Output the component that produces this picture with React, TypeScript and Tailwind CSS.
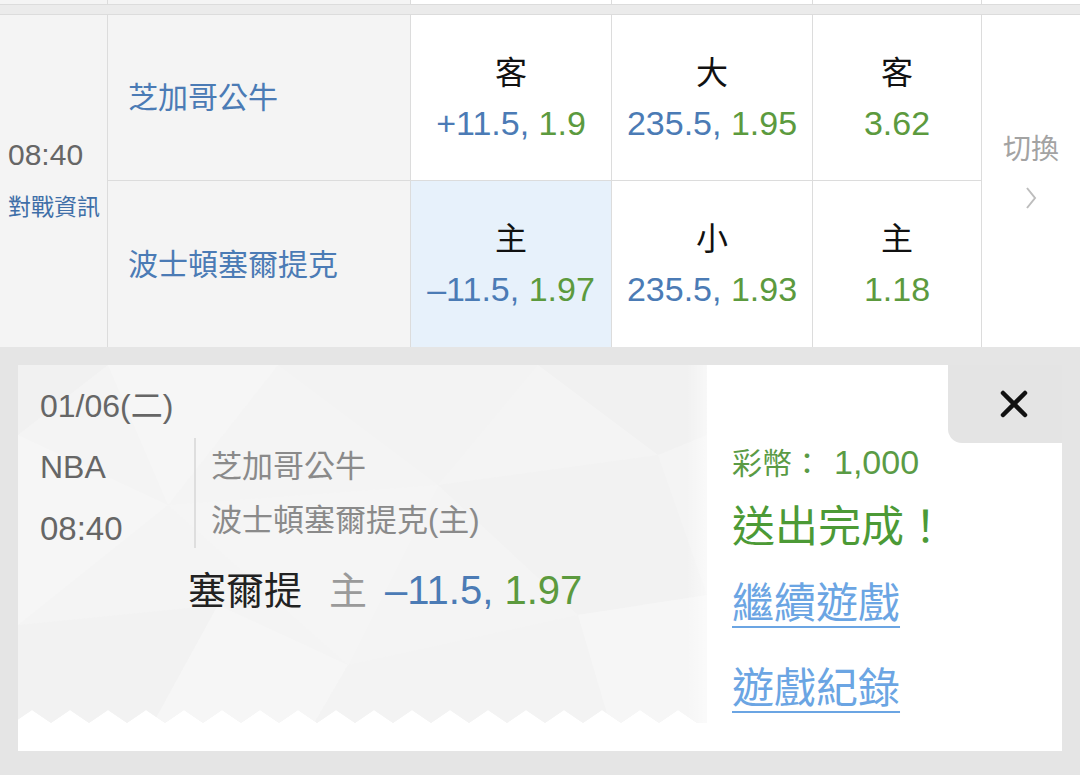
import React from "react";

const FONT = '"Liberation Sans", "Noto Sans CJK TC", sans-serif';

const cols = "grid grid-cols-[108px_303px_201px_201px_169px_98px]";

type Odd = { label: string; line?: string; price: string; active?: boolean };

const topRow: Odd[] = [
  { label: "客", line: "+11.5, ", price: "1.9" },
  { label: "大", line: "235.5, ", price: "1.95" },
  { label: "客", price: "3.62" },
];
const bottomRow: Odd[] = [
  { label: "主", line: "–11.5, ", price: "1.97", active: true },
  { label: "小", line: "235.5, ", price: "1.93" },
  { label: "主", price: "1.18" },
];

function OddCell({ o, last }: { o: Odd; last?: boolean }) {
  return (
    <div
      className={`flex flex-col items-center justify-center border-r border-[#dcdcdc] ${last ? "" : "border-b"} ${
        o.active ? "bg-[#e7f1fb]" : "bg-white"
      }`}
    >
      <div className="text-[32px] leading-[50px] text-[#111]">{o.label}</div>
      <div className="whitespace-pre text-[34px] leading-[50px]">
        {o.line && <span className="text-[#4b7bb5]">{o.line}</span>}
        <span className="text-[#5c9a3e]">{o.price}</span>
      </div>
    </div>
  );
}

// zigzag clip for the faceted ticket stub
function zigzag() {
  const pts: string[] = ["0,0", "689,0", "689,358"];
  for (let x = 689; x > 0; x -= 38) {
    pts.push(`${x - 10},358`, `${x - 29},345`);
  }
  pts.push("0,345");
  return pts.join(" ");
}

function Facets() {
  return (
    <svg className="absolute inset-0" width="689" height="386" viewBox="0 0 689 386">
      <defs>
        <clipPath id="stub">
          <polygon points={zigzag()} />
        </clipPath>
        <linearGradient id="fade" x1="0" x2="1" y1="0" y2="0">
          <stop offset="0.97" stopColor="#fff" stopOpacity="0" />
          <stop offset="1" stopColor="#fff" stopOpacity="0.5" />
        </linearGradient>
      </defs>
      <g clipPath="url(#stub)">
        <rect width="689" height="386" fill="#f4f4f4" />
        <polygon points="0,0 90,0 0,70" fill="#f1f1f1" />
        <polygon points="90,0 260,0 150,140" fill="#f6f6f6" />
        <polygon points="260,0 520,0 420,120" fill="#f3f3f3" />
        <polygon points="520,0 689,0 689,70 640,90" fill="#f1f1f1" />
        <polygon points="0,70 150,140 0,260" fill="#f6f6f6" />
        <polygon points="150,140 420,120 330,300" fill="#f5f5f5" />
        <polygon points="420,120 640,90 689,230 560,250" fill="#f2f2f2" />
        <polygon points="0,260 200,240 120,386 0,386" fill="#f2f2f2" />
        <polygon points="200,240 330,300 280,386 120,386" fill="#f6f6f6" />
        <polygon points="330,300 560,250 600,386 280,386" fill="#f3f3f3" />
        <polygon points="560,250 689,230 689,386 600,386" fill="#f6f6f6" />
        <rect width="689" height="386" fill="url(#fade)" />
      </g>
    </svg>
  );
}

export default function App() {
  return (
    <div
      className="flex h-[775px] w-[1080px] flex-col overflow-hidden bg-[#e5e5e5]"
      style={{ fontFamily: FONT }}
    >
      {/* previous row tail */}
      <div className={`${cols} h-[4px]`}>
        <div className="border-r border-[#dcdcdc] bg-[#f4f4f4]" />
        <div className="border-r border-[#dcdcdc] bg-[#f4f4f4]" />
        <div className="border-r border-[#dcdcdc] bg-white" />
        <div className="border-r border-[#dcdcdc] bg-white" />
        <div className="border-r border-[#dcdcdc] bg-white" />
        <div className="bg-white" />
      </div>
      <div className="h-[11px] border-y border-[#dcdcdc] bg-[#ebebeb]" />

      {/* match row */}
      <div className={`${cols} grid-rows-[166px_166px]`}>
        <div className="row-span-2 flex flex-col justify-center border-r border-[#dcdcdc] bg-[#f4f4f4] pl-[8px]">
          <div className="text-[30px] leading-[52px] text-[#666]">08:40</div>
          <div className="text-[23px] leading-[52px] text-[#3f6fa8]">對戰資訊</div>
        </div>
        <div className="flex items-center border-r border-b border-[#dcdcdc] bg-[#f4f4f4] pl-[20px] text-[30px] text-[#4b7bb5]">
          芝加哥公牛
        </div>
        {topRow.map((o, i) => (
          <OddCell key={i} o={o} />
        ))}
        <div className="row-span-2 flex flex-col items-center justify-center bg-white pb-[14px] text-[#a3a3a3]">
          <div className="text-[28px] leading-[48px]">切換</div>
          <svg width="14" height="48" viewBox="0 0 14 48">
            <polyline points="3,14 11,24 3,34" fill="none" stroke="#bdbdbd" strokeWidth="2" />
          </svg>
        </div>
        <div className="flex items-center border-r border-[#dcdcdc] bg-[#f4f4f4] pl-[20px] text-[30px] text-[#4b7bb5]">
          波士頓塞爾提克
        </div>
        {bottomRow.map((o, i) => (
          <OddCell key={i} o={o} last />
        ))}
      </div>

      {/* confirmation ticket */}
      <div className="mx-[18px] mt-[18px] flex h-[386px] bg-white">
        <div className="relative w-[689px]">
          <Facets />
          <div className="relative pl-[22px] pt-[10px] text-[#666]">
            <div className="text-[32px] leading-[62px]">01/06(二)</div>
            <div className="flex items-start">
              <div className="w-[154px] text-[32px] leading-[61px]">
                <div>NBA</div>
                <div className="text-[33px]">08:40</div>
              </div>
              <div className="mt-[1px] h-[110px] border-l-2 border-[#dedede] pl-[15px] pt-[2px] text-[31px] leading-[54px] text-[#8a8a8a]">
                <div>芝加哥公牛</div>
                <div>波士頓塞爾提克(主)</div>
              </div>
            </div>
            <div className="ml-[148px] flex items-baseline whitespace-pre leading-[62px]">
              <span className="text-[38px] text-[#222]">塞爾提</span>
              <span className="ml-[27px] text-[38px] text-[#9a9a9a]">主</span>
              <span className="ml-[18px] text-[40px] text-[#4b7bb5]">–11.5, </span>
              <span className="text-[40px] text-[#5c9a3e]">1.97</span>
            </div>
          </div>
        </div>

        <div className="flex flex-1 flex-col">
          <div className="flex h-[78px] w-[114px] items-center justify-end self-end rounded-bl-[14px] bg-[#e4e4e4] pr-[34px]">
            <svg width="28" height="28" viewBox="0 0 28 28">
              <path d="M3 3L25 25M25 3L3 25" stroke="#111" strokeWidth="4.5" strokeLinecap="round" />
            </svg>
          </div>
          <div className="pl-[25px]">
            <div className="flex items-baseline text-[30px] leading-[38px] text-[#5a9b45]">
              彩幣：<span className="ml-[12px] text-[34px]">1,000</span>
            </div>
            <div className="mt-[14px] text-[43px] leading-[60px] text-[#4c9a36]">送出完成！</div>
            <div className="mt-[17px] text-[42px] leading-[60px] text-[#6ba5e3] underline decoration-2 underline-offset-[8px]">
              繼續遊戲
            </div>
            <div className="mt-[25px] text-[42px] leading-[60px] text-[#6ba5e3] underline decoration-2 underline-offset-[8px]">
              遊戲紀錄
            </div>
          </div>
        </div>
      </div>
    </div>
  );
}
